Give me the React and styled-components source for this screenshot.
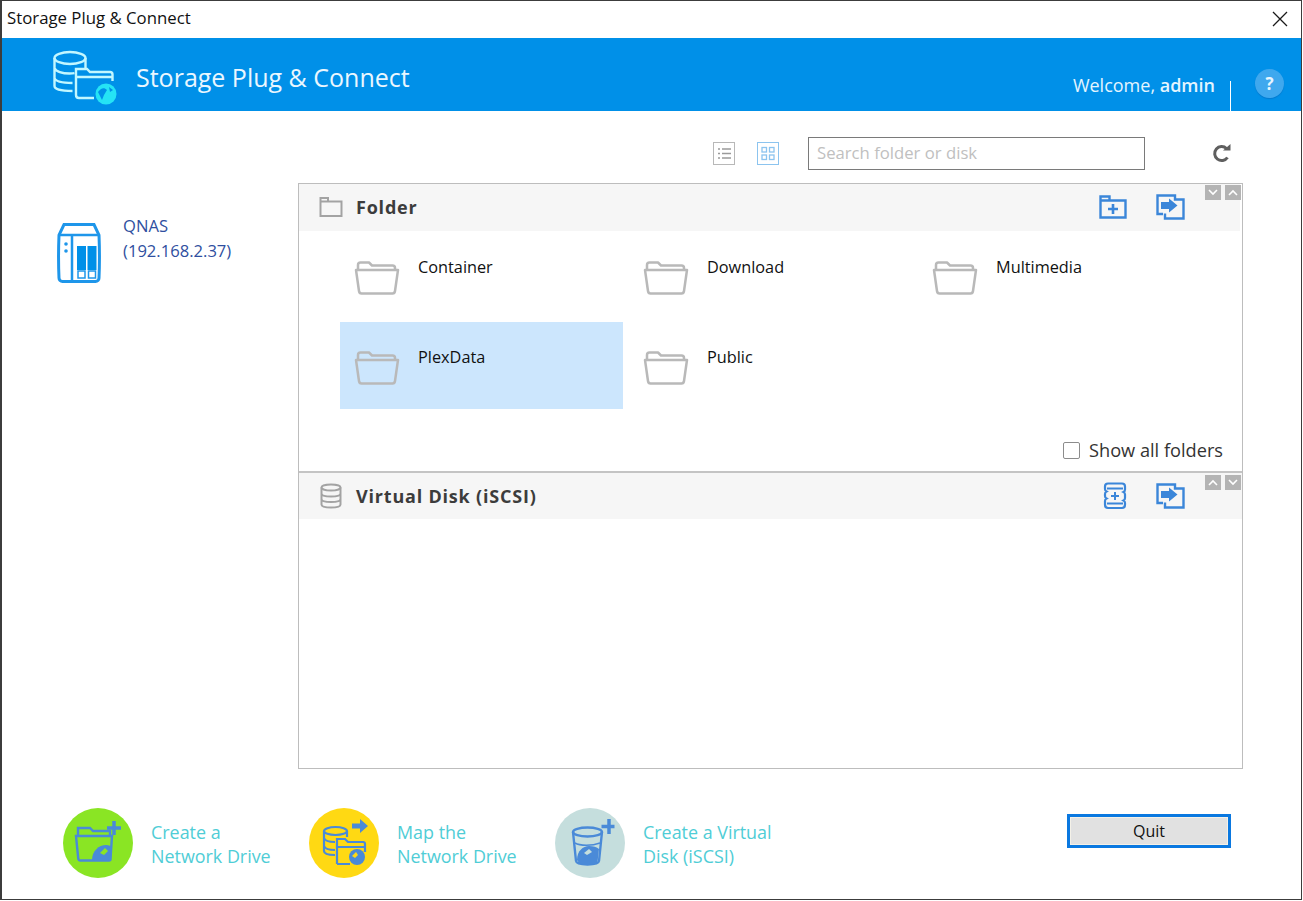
import styled, { createGlobalStyle } from "styled-components";
import { useState } from "react";

const GlobalStyle = createGlobalStyle`
  html, body { margin: 0; padding: 0; background: #fff; }
  body { font-family: "Open Sans", "Noto Sans", sans-serif; }
`;

const FOLDERS = ["Container", "Download", "Multimedia", "PlexData", "Public"];

const ACTIONS = [
  { color: "#8ae524", label: ["Create a", "Network Drive"], kind: "folder" },
  { color: "#ffd913", label: ["Map the", "Network Drive"], kind: "map" },
  { color: "#c5dedd", label: ["Create a Virtual", "Disk (iSCSI)"], kind: "disk" },
];

const BLUE = "#3b86d9";
const ICON_BLUE = "#4a8ad8";

const LogoIcon = () => (
  <svg width="68" height="56" viewBox="0 0 68 56" fill="none" stroke="#c2f7ff" strokeWidth="2.400">
    <ellipse cx="18" cy="9" rx="15.500" ry="6" />
    <path d="M2.500 9v28c0 3 6 5 18 5M33.500 9v12M2.500 19c1 3.500 8 5.500 15 5.500 3 0 4-.2 5-.4M2.500 29c1 3.500 8 5 18 5" />
    <path d="M24 46V20h11l3 3h20c1.500 0 2.500 1 2.500 2.500V32" />
    <path d="M24 46c0 2 1 3 3 3h15M25 28h35" />
    <circle cx="54" cy="45" r="10.500" fill="#25e3f5" stroke="none" />
    <path d="M46 43c3-4 6-5 9-2l-3 5-2 5zM57 38l4 3-3 2z" fill="#0090e8" stroke="none" />
  </svg>
);

const NasIcon = () => (
  <svg width="46" height="62" viewBox="0 0 46 62" fill="none">
    <path d="M8 2.500h30l5 10.500c.6 15 .6 30 0 43 0 2-1.500 3.500-3.500 3.500h-33C4.500 59.500 3 58 3 56c-.6-13-.6-28 0-43z" stroke="#1e96ea" strokeWidth="3" />
    <path d="M3 13h40M16 13v46" stroke="#1e96ea" strokeWidth="2.500" />
    <circle cx="10" cy="22" r="1.800" fill="#1e96ea" />
    <circle cx="10" cy="29" r="1.800" fill="#1e96ea" />
    <rect x="21" y="24" width="9" height="24" fill="#0090e8" />
    <rect x="31.500" y="24" width="9" height="24" fill="#0090e8" />
    <path d="M22 49h7v7h-7zM32.500 49h7v7h-7z" stroke="#1e96ea" strokeWidth="1.500" />
  </svg>
);

const FolderOpenIcon = () => (
  <svg width="46" height="36" viewBox="0 0 46 36" fill="none" stroke="#b9b9b9" strokeWidth="2.500" strokeLinejoin="round">
    <path d="M4 11V5c0-1.500 1-2.500 2.500-2.500H15l3 3h20.500c1.500 0 2.500 1 2.500 2.500v3" />
    <path d="M2 10h42l-3 21c-.2 1.500-1 2.500-2.500 2.500h-31c-1.500 0-2.300-1-2.500-2.500z" />
  </svg>
);

const FolderHeadIcon = () => (
  <svg width="24" height="22" viewBox="0 0 24 22" fill="none" stroke="#a3a3a3" strokeWidth="2">
    <path d="M1.500 20V2h7.500v3.500h13.500V20zM1.500 5.500H9" />
  </svg>
);

const DiskHeadIcon = () => (
  <svg width="24" height="26" viewBox="0 0 24 26" fill="none" stroke="#a3a3a3" strokeWidth="2">
    <ellipse cx="12" cy="4.500" rx="9.500" ry="3" />
    <path d="M2.500 4.500v17c0 2 4 3 9.500 3s9.500-1 9.500-3v-17M2.500 10.500c0 2 4 3 9.500 3s9.500-1 9.500-3M2.500 16c0 2 4 3 9.500 3s9.500-1 9.500-3" />
  </svg>
);

const NewFolderIcon = () => (
  <svg width="28" height="24" viewBox="0 0 28 24" fill="none" stroke={BLUE} strokeWidth="2.400">
    <path d="M1.500 22.500V1.500h9v4h16v17zM1.500 5.500h9" />
    <path d="M14 9v10M9 14h10" strokeWidth="2.600" />
  </svg>
);

const MoveIcon = () => (
  <svg width="30" height="26" viewBox="0 0 30 26" fill="none" stroke={BLUE} strokeWidth="2.400">
    <path d="M7 20H1.500V1.500H19v4h8.500v19H9v-5" />
    <path d="M5 8h8V4.500L21.500 11.500 13 18.500V15H5z" fill={BLUE} stroke="none" />
  </svg>
);

const NewDiskIcon = () => (
  <svg width="24" height="28" viewBox="0 0 24 28" fill="none" stroke={BLUE} strokeWidth="2.200">
    <path d="M5 1.500h14c2 0 3 1.500 3 3v3c0 1-.5 2-1.500 2.500 1 .5 1.500 1.500 1.500 2.500v3.500c0 1-.5 2-1.500 2.500 1 .5 1.500 1.500 1.500 2.500v1.500c0 2-1 3.500-3 3.500H5c-2 0-3-1.500-3-3.500V19c0-1 .5-2 1.500-2.500C2.500 16 2 15 2 14v-2c0-1 .5-2 1.500-2.500C2.500 9 2 8 2 7V4.500c0-1.500 1-3 3-3z" />
    <path d="M12 10v8M8 14h8M4 6.500h16M4 21.500h16" strokeWidth="2" />
  </svg>
);

const ListIcon = () => (
  <svg width="22" height="23" viewBox="0 0 22 23" fill="none" stroke="#b8b8b8">
    <rect x=".5" y=".5" width="21" height="22" strokeWidth="1" />
    <path d="M5 7h2M9 7h9M5 11.500h2M9 11.500h9M5 16h2M9 16h9" stroke="#9a9a9a" strokeWidth="1.600" />
  </svg>
);

const GridIcon = () => (
  <svg width="22" height="23" viewBox="0 0 22 23" fill="none" stroke="#8cc4ef">
    <rect x=".5" y=".5" width="21" height="22" />
    <rect x="5" y="5.500" width="4.500" height="4.500" strokeWidth="1.300" />
    <rect x="12.500" y="5.500" width="4.500" height="4.500" strokeWidth="1.300" />
    <rect x="5" y="13" width="4.500" height="4.500" strokeWidth="1.300" />
    <rect x="12.500" y="13" width="4.500" height="4.500" strokeWidth="1.300" />
  </svg>
);

const RefreshIcon = () => (
  <svg width="20" height="20" viewBox="0 0 20 20" fill="none">
    <path d="M15.500 13.500A7 7 0 1 1 14.500 4.500" stroke="#5f5f5f" strokeWidth="3" />
    <path d="M11 6.500h7.500V0z" fill="#5f5f5f" />
  </svg>
);

const Chevron = ({ up }) => (
  <svg width="10" height="7" viewBox="0 0 10 7" fill="none" stroke="#fff" strokeWidth="1.600">
    <path d={up ? "M1 6l4-4 4 4" : "M1 1l4 4 4-4"} />
  </svg>
);

const CloseIcon = () => (
  <svg width="16" height="16" viewBox="0 0 16 16" stroke="#1a1a1a" strokeWidth="1.300">
    <path d="M1 1l14 14M15 1L1 15" />
  </svg>
);

const ActionGlyph = ({ kind }) => {
  if (kind === "folder") {
    return (
      <svg width="48" height="46" viewBox="0 0 48 46" fill="none" stroke={ICON_BLUE} strokeWidth="2.400">
        <path d="M4 17V8h12l3 3h17v6" />
        <path d="M2 16h36l-1.500 23c0 1-.7 1.500-1.500 1.500H6c-1 0-1.500-.5-1.700-1.500z" />
        <path d="M18 40c0-9 7-15 14-15 3 0 5 1 6 2l-1 13.500z" fill={ICON_BLUE} stroke="none" />
        <path d="M26 33l5-5 3 3-4 4z" fill="#8ae524" stroke="none" />
        <path d="M40 1v14M33 8h14" strokeWidth="3.500" />
      </svg>
    );
  }
  if (kind === "map") {
    return (
      <svg width="54" height="48" viewBox="0 0 54 48" fill="none" stroke={ICON_BLUE} strokeWidth="2.200">
        <ellipse cx="18.500" cy="12" rx="11.500" ry="4" />
        <path d="M7 12v20c0 2.500 4 4 11 4M30 12v6M7 19c1 3 5 4 11 4M7 27c1 3 5 4 11 4" />
        <path d="M20 45V20h8l3 3h15c1 0 2 1 2 2v8" />
        <path d="M20 45h13M21 28h27" />
        <circle cx="40" cy="38" r="8" fill={ICON_BLUE} stroke="none" />
        <path d="M35 37l4-4 2 3-3 3z" fill="#ffd913" stroke="none" />
        <path d="M35 4.500h8V0l8 7-8 7V9.500h-8z" fill={ICON_BLUE} stroke="none" />
      </svg>
    );
  }
  return (
    <svg width="50" height="48" viewBox="0 0 50 48" fill="none" stroke={ICON_BLUE} strokeWidth="2.400">
      <ellipse cx="22.500" cy="13" rx="14.500" ry="4.500" />
      <path d="M8 13l3 29c.2 2 5 3.500 11.500 3.500S33.800 44 34 42l3-29" />
      <path d="M10 24c5 3 17 3 25 0" strokeWidth="1.500" />
      <path d="M12 41c0-9 6-14 12-14 4 0 8 1 10 3l-1.500 13c-1 2-4 3-10 3s-9-2-10.500-5z" fill={ICON_BLUE} stroke="none" />
      <path d="M19 34l5-4 3 3-5 3z" fill="#c5dedd" stroke="none" />
      <path d="M44 0v15M36.500 7.500h13" strokeWidth="3.500" />
    </svg>
  );
};

const App = () => {
  const [selected, setSelected] = useState("PlexData");
  return (
    <Window>
      <GlobalStyle />
      <TitleBar>
        <span>Storage Plug &amp; Connect</span>
        <CloseButton type="button" aria-label="Close">
          <CloseIcon />
        </CloseButton>
      </TitleBar>
      <Banner>
        <LogoSlot>
          <LogoIcon />
        </LogoSlot>
        <BannerTitle>Storage Plug &amp; Connect</BannerTitle>
        <Welcome>
          Welcome, <b>admin</b>
        </Welcome>
        <HelpWrap>
          <Help>?</Help>
        </HelpWrap>
      </Banner>
      <Main>
        <Sidebar>
          <Device>
            <NasIcon />
            <DeviceName>
              QNAS
              <br />
              (192.168.2.37)
            </DeviceName>
          </Device>
        </Sidebar>
        <Content>
          <Toolbar>
            <ViewToggle>
              <ListIcon />
              <GridIcon />
            </ViewToggle>
            <Search placeholder="Search folder or disk" />
            <RefreshSlot>
              <RefreshIcon />
            </RefreshSlot>
          </Toolbar>
          <Panel>
            <SectionHeader>
              <HeadIconSlot>
                <FolderHeadIcon />
              </HeadIconSlot>
              <SectionTitle>Folder</SectionTitle>
              <HeaderActions>
                <NewFolderIcon />
                <MoveIcon />
              </HeaderActions>
              <Collapse>
                <CollapseBtn><Chevron /></CollapseBtn>
                <CollapseBtn><Chevron up /></CollapseBtn>
              </Collapse>
            </SectionHeader>
            <FolderArea>
              <FolderGrid>
                {FOLDERS.map((name) => (
                  <FolderCard key={name} $active={name === selected} onClick={() => setSelected(name)}>
                    <FolderOpenIcon />
                    <FolderName>{name}</FolderName>
                  </FolderCard>
                ))}
              </FolderGrid>
              <ShowAll>
                <CheckBox />
                Show all folders
              </ShowAll>
            </FolderArea>
            <SectionHeader $divider>
              <HeadIconSlot>
                <DiskHeadIcon />
              </HeadIconSlot>
              <SectionTitle>Virtual Disk (iSCSI)</SectionTitle>
              <HeaderActions>
                <NewDiskIcon />
                <MoveIcon />
              </HeaderActions>
              <Collapse $low>
                <CollapseBtn><Chevron up /></CollapseBtn>
                <CollapseBtn><Chevron /></CollapseBtn>
              </Collapse>
            </SectionHeader>
          </Panel>
        </Content>
      </Main>
      <Footer>
        <Shortcuts>
          {ACTIONS.map((a) => (
            <Shortcut key={a.kind}>
              <Badge $color={a.color}>
                <ActionGlyph kind={a.kind} />
              </Badge>
              <ShortcutLabel>
                {a.label[0]}
                <br />
                {a.label[1]}
              </ShortcutLabel>
            </Shortcut>
          ))}
        </Shortcuts>
        <QuitButton type="button">Quit</QuitButton>
      </Footer>
    </Window>
  );
};

const Window = styled.div`
  box-sizing: border-box;
  width: 1302px;
  height: 900px;
  border: 1px solid #3c3c3c;
  border-left-width: 2px;
  display: flex;
  flex-direction: column;
  background: #fff;
  overflow: hidden;
`;

const TitleBar = styled.div`
  height: 37px;
  flex: none;
  display: flex;
  align-items: center;
  justify-content: space-between;
  padding: 0 0 4px 5px;
  box-sizing: border-box;
  font-size: 16.800px;
  color: #111;
`;

const CloseButton = styled.button`
  border: 0;
  background: none;
  padding: 0;
  width: 16px;
  height: 16px;
  margin: 2px 13px 0 0;
  display: flex;
`;

const Banner = styled.header`
  height: 73px;
  flex: none;
  background: #0090e8;
  display: flex;
  align-items: flex-start;
  color: #fff;
`;

const LogoSlot = styled.div`
  margin: 11px 0 0 50px;
  width: 84px;
`;

const BannerTitle = styled.div`
  font-size: 25px;
  line-height: 33px;
  margin-top: 23px;
  color: #eaf7ff;
  flex: 1;
`;

const Welcome = styled.div`
  font-size: 18px;
  line-height: 24px;
  margin-top: 35px;
  color: #e4f5ff;
  b { font-weight: 600; }
`;

const HelpWrap = styled.div`
  margin-left: 15px;
  border-left: 1.500px solid #fff;
  height: 30px;
  margin-top: 43px;
  width: 70px;
`;

const Help = styled.div`
  width: 29px;
  height: 29px;
  border-radius: 50%;
  background: #3fa8ee;
  color: #e8f6ff;
  font-weight: 700;
  font-size: 17px;
  line-height: 29px;
  text-align: center;
  margin: -12px 0 0 24px;
  box-shadow: 0 1px 1px rgba(0, 90, 170, 0.4);
`;

const Main = styled.main`
  height: 658px;
  flex: none;
  display: flex;
`;

const Sidebar = styled.aside`
  width: 296px;
  flex: none;
`;

const Device = styled.div`
  display: flex;
  align-items: flex-start;
  gap: 21px;
  margin: 111px 0 0 54px;
`;

const DeviceName = styled.div`
  color: #2f4fa0;
  font-size: 16.600px;
  font-weight: 500;
  line-height: 25px;
  margin-top: -9px;
  white-space: nowrap;
`;

const Content = styled.section`
  width: 945px;
  flex: none;
  display: flex;
  flex-direction: column;
`;

const Toolbar = styled.div`
  height: 72px;
  flex: none;
  box-sizing: border-box;
  display: flex;
  align-items: flex-start;
  padding-top: 26px;
`;

const ViewToggle = styled.div`
  display: flex;
  gap: 22px;
  margin: 5px 0 0 415px;
  width: 95px;
  svg { flex: none; }
`;

const Search = styled.input`
  box-sizing: border-box;
  width: 337px;
  height: 33px;
  border: 1.500px solid #7a7a7a;
  outline: 0;
  padding: 0 8px 2px;
  font: 16.700px "Open Sans", sans-serif;
  background: #fff;
  &::placeholder { color: #c0c0c0; opacity: 1; }
`;

const RefreshSlot = styled.div`
  margin: 7px 0 0 67px;
`;

const Panel = styled.div`
  height: 586px;
  box-sizing: border-box;
  border: 1.500px solid #bdbdbd;
  display: flex;
  flex-direction: column;
  padding-right: 2px;
`;

const SectionHeader = styled.div`
  height: 47px;
  flex: none;
  box-sizing: border-box;
  background: #f6f6f6;
  display: flex;
  align-items: center;
  padding-left: 20px;
  ${(p) => (p.$divider
    ? "border-top: 2px solid #c4c4c4; margin-right: -2px; padding-right: 2px; height: 48px;"
    : "padding-bottom: 2px;")}
`;

const HeadIconSlot = styled.div`
  width: 37px;
  display: flex;
  svg { flex: none; }
`;

const SectionTitle = styled.div`
  font-size: 18px;
  font-weight: 700;
  letter-spacing: 0.800px;
  color: #3c3c3c;
  flex: 1;
`;

const HeaderActions = styled.div`
  display: flex;
  align-items: center;
  gap: 29px;
  margin-right: 19px;
`;

const Collapse = styled.div`
  display: flex;
  gap: 4px;
  align-self: flex-start;
  margin: ${(p) => (p.$low ? "2px" : "1px")} -1px 0 0;
`;

const CollapseBtn = styled.div`
  width: 16px;
  height: 15px;
  background: #b4b4b4;
  display: flex;
  align-items: center;
  justify-content: center;
`;

const FolderArea = styled.div`
  height: 240px;
  flex: none;
  display: flex;
  flex-direction: column;
  justify-content: space-between;
  padding: 1px 0 9px 41px;
  box-sizing: border-box;
`;

const FolderGrid = styled.div`
  display: grid;
  grid-template-columns: repeat(3, 283px);
  grid-auto-rows: 87px;
  column-gap: 6px;
  row-gap: 3px;
`;

const FolderCard = styled.div`
  display: flex;
  align-items: flex-start;
  gap: 18px;
  padding: 28px 0 0 14px;
  box-sizing: border-box;
  background: ${(p) => (p.$active ? "#cce6fd" : "transparent")};
`;

const FolderName = styled.div`
  font-size: 16.300px;
  line-height: 22px;
  color: #111;
  margin-top: -4px;
`;

const ShowAll = styled.label`
  align-self: flex-end;
  display: flex;
  align-items: center;
  gap: 9px;
  font-size: 18.200px;
  color: #333;
  margin-right: 17px;
`;

const CheckBox = styled.span`
  width: 17px;
  height: 17px;
  border: 1.500px solid #8c8c8c;
  border-radius: 2px;
  box-sizing: border-box;
  background: #fff;
`;

const Footer = styled.footer`
  flex: 1;
  display: flex;
  align-items: flex-start;
  justify-content: space-between;
  padding: 0 70px 0 61px;
`;

const Shortcuts = styled.div`
  display: flex;
  gap: 40px;
  margin-top: 39px;
`;

const Shortcut = styled.div`
  display: flex;
  align-items: center;
  gap: 18px;
  width: 206px;
`;

const Badge = styled.div`
  width: 70px;
  height: 70px;
  flex: none;
  border-radius: 50%;
  background: ${(p) => p.$color};
  display: flex;
  align-items: center;
  justify-content: center;
`;

const ShortcutLabel = styled.div`
  font-size: 17.900px;
  line-height: 24px;
  margin-top: 2px;
  color: #4fcdd6;
  white-space: nowrap;
`;

const QuitButton = styled.button`
  box-sizing: border-box;
  width: 164px;
  height: 34px;
  margin-top: 45px;
  border: 3px solid #0a78e0;
  background: #e1e1e1;
  box-shadow: inset 0 0 0 1px #f4f1e8;
  font: 16px "Open Sans", sans-serif;
  color: #111;
  padding: 0;
`;

export default App;
